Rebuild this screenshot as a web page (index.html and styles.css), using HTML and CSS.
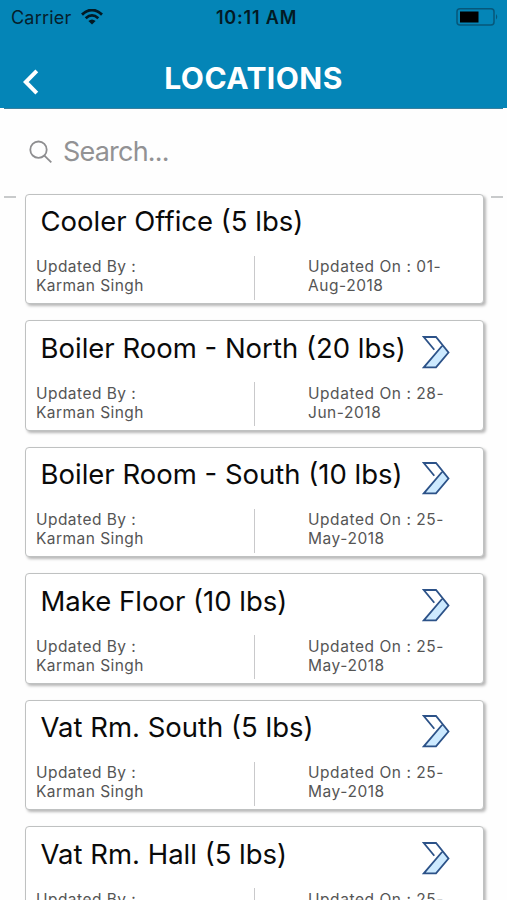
FILE: index.html
```html
<!DOCTYPE html>
<html lang="en">
<head>
    <meta charset="UTF-8">
    <meta name="viewport" content="width=device-width, initial-scale=1.0">
    <title>Locations</title>
    <link rel="stylesheet" href="styles.css">
</head>
<body>
    <svg width="0" height="0" class="symbols">
        <symbol id="arrow" viewBox="0 0 28 34">
            <path class="arrow-fill" d="M20.5 11 L26.5 17.5 L14 32.3 H1.8 Z"/>
            <path class="arrow-line" d="M12.3 14.7 L1.8 2 H14 L26.5 17.5 L14 32.3 H1.8 L20 11"/>
        </symbol>
    </svg>

    <header class="header">
        <div class="status-bar">
            <div class="carrier">
                <span>Carrier</span>
                <svg class="wifi" viewBox="0 0 22 16">
                    <path d="M1 5.6 Q11 -3.6 21 5.6" />
                    <path d="M4.7 9.2 Q11 3.6 17.3 9.2" />
                    <path class="wifi-dot" d="M7.4 12 Q11 9 14.6 12 L11 15.6 Z" />
                </svg>
            </div>
            <div class="time">10:11 AM</div>
            <svg class="battery" viewBox="0 0 43 18">
                <rect class="battery-case" x="1" y="0.8" width="37" height="16.2" rx="3" />
                <rect x="4" y="3.5" width="18.5" height="11" />
                <path class="battery-tip" d="M40 6 Q42.5 8.8 40 11.6 Z" />
            </svg>
        </div>
        <div class="nav-bar">
            <svg class="back" viewBox="0 0 16 26">
                <path d="M13.8 1.8 L2.8 13 L13.8 24.2" />
            </svg>
            <h1>LOCATIONS</h1>
        </div>
    </header>

    <div class="search">
        <svg class="search-icon" viewBox="0 0 24 24">
            <circle cx="9.5" cy="9.7" r="8.2" />
            <path d="M15.4 15.6 L22.3 22.4" />
        </svg>
        <span>Search...</span>
    </div>

    <main class="list">
        <div class="card">
            <div class="card-top"><h2>Cooler Office (5 lbs)</h2></div>
            <div class="card-info">
                <p class="by">Updated By :<br>Karman Singh</p>
                <p class="on">Updated On : 01-<br>Aug-2018</p>
            </div>
        </div>
        <div class="card">
            <div class="card-top"><h2>Boiler Room - North (20 lbs)</h2><svg class="arrow"><use href="#arrow"/></svg></div>
            <div class="card-info">
                <p class="by">Updated By :<br>Karman Singh</p>
                <p class="on">Updated On : 28-<br>Jun-2018</p>
            </div>
        </div>
        <div class="card">
            <div class="card-top"><h2>Boiler Room - South (10 lbs)</h2><svg class="arrow"><use href="#arrow"/></svg></div>
            <div class="card-info">
                <p class="by">Updated By :<br>Karman Singh</p>
                <p class="on">Updated On : 25-<br>May-2018</p>
            </div>
        </div>
        <div class="card">
            <div class="card-top"><h2>Make Floor (10 lbs)</h2><svg class="arrow"><use href="#arrow"/></svg></div>
            <div class="card-info">
                <p class="by">Updated By :<br>Karman Singh</p>
                <p class="on">Updated On : 25-<br>May-2018</p>
            </div>
        </div>
        <div class="card">
            <div class="card-top"><h2>Vat Rm. South (5 lbs)</h2><svg class="arrow"><use href="#arrow"/></svg></div>
            <div class="card-info">
                <p class="by">Updated By :<br>Karman Singh</p>
                <p class="on">Updated On : 25-<br>May-2018</p>
            </div>
        </div>
        <div class="card">
            <div class="card-top"><h2>Vat Rm. Hall (5 lbs)</h2><svg class="arrow"><use href="#arrow"/></svg></div>
            <div class="card-info">
                <p class="by">Updated By :</p>
                <p class="on">Updated On : 25-</p>
            </div>
        </div>
    </main>
</body>
</html>
```
FILE: styles.css
```css
* {
    box-sizing: border-box;
}

body {
    margin: 0;
    height: 900px;
    overflow: hidden;
    background: #fefefe;
    font-family: Inter, "Liberation Sans", sans-serif;
    color: #0a0a0a;
}

h1, h2, p {
    margin: 0;
}

.symbols {
    position: absolute;
}

.header {
    height: 108px;
    background: #0485b7;
}

/* status bar */
.status-bar {
    display: grid;
    grid-template-columns: 1fr auto 1fr;
    align-items: center;
    height: 35px;
    padding: 0 8px 0 11px;
    font-size: 18px;
    color: #06202c;
}

.carrier {
    display: flex;
    align-items: center;
    gap: 10px;
    letter-spacing: 0.2px;
}

.wifi {
    width: 22px;
    height: 16px;
    margin-top: -2px;
    fill: none;
    stroke: #031a24;
    stroke-width: 2.8;
}

.wifi .wifi-dot {
    fill: #031a24;
    stroke: none;
}

.time {
    font-weight: 600;
    letter-spacing: 0.8px;
    margin-left: 3px;
    color: #031a24;
}

.battery {
    justify-self: end;
    width: 43px;
    height: 18px;
    margin-top: -1px;
    fill: #000;
}

.battery .battery-case {
    fill: none;
    stroke: #07577a;
    stroke-width: 1.5;
}

.battery .battery-tip {
    fill: #07577a;
}

/* title row */
.nav-bar {
    display: grid;
    grid-template-columns: 60px 1fr 60px;
    align-items: center;
    height: 74px;
    margin: 0 4px;
    padding-top: 13px;
    border-bottom: 1px solid #3a7f9d;
    background: #0485b7;
}

.back {
    width: 16px;
    height: 26px;
    margin: 8px 0 0 19px;
    fill: none;
    stroke: #fff;
    stroke-width: 4;
}

.nav-bar h1 {
    text-align: center;
    font-size: 30px;
    line-height: 36px;
    font-weight: 700;
    letter-spacing: 0.45px;
    color: #fff;
}

/* search */
.search {
    display: flex;
    align-items: center;
    gap: 11px;
    height: 90px;
    margin: 0 4px;
    padding: 0 0 1px 25px;
    border-bottom: 2px solid #c8cacb;
    font-size: 27px;
    letter-spacing: -0.8px;
    color: #929294;
}

.search-icon {
    width: 24px;
    height: 24px;
    fill: none;
    stroke: #8e8e90;
    stroke-width: 1.8;
}

.search span {
    margin-left: -1px;
}

/* the list covers the middle of the search underline */
.list {
    position: relative;
    margin: -4.5px 16px 0;
    padding: 0 7.5px 0 8.5px;
    background: #fefefe;
}

.card {
    height: 110.6px;
    margin-bottom: 16px;
    border: 1px solid #bfc1c1;
    border-radius: 4px;
    background: #fff;
    box-shadow: 2px 2px 3px rgba(0, 0, 0, 0.28);
}

.card-top {
    display: flex;
    justify-content: space-between;
    height: 61px;
    padding: 9.5px 33px 0 15px;
}

.card-top h2 {
    font-size: 27.5px;
    line-height: 34px;
    font-weight: 430;
    white-space: nowrap;
}

.arrow {
    flex: none;
    width: 28px;
    height: 34px;
    margin-top: 4px;
}

.arrow-fill {
    fill: #cdeaff;
}

.arrow-line {
    fill: none;
    stroke: #2c5288;
    stroke-width: 1.8;
}

.card-info {
    display: grid;
    grid-template-columns: 219px 1fr;
    height: 44px;
    padding-left: 10.5px;
    font-size: 15.5px;
    line-height: 19px;
    letter-spacing: 0.45px;
    color: #555;
}

.by {
    border-right: 1px solid #c9c9cb;
    padding-top: 1.5px;
}

.on {
    padding: 1.5px 0 0 53px;
    letter-spacing: 0.55px;
}
```
